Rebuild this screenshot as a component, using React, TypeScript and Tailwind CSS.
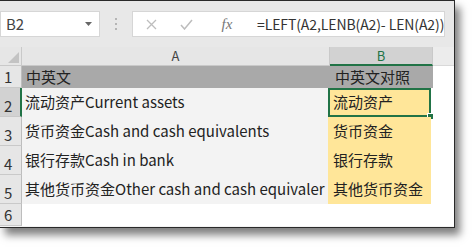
import React from "react";

const font = { fontFamily: '"Noto Sans CJK SC", "Noto Sans", sans-serif' };

function RowHead({ n, h, selected }: { n: number; h: string; selected?: boolean }) {
  return (
    <div
      className={`${h} w-[22px] shrink-0 flex items-end pl-[4px] pb-[1px] border-b border-[#c9c9c9] text-[15px] leading-[18px] text-[#333] ${
        selected ? "bg-[#d2d2d2] border-r-2 border-r-[#217346]" : "bg-[#e6e6e6] border-r border-r-[#bdbdbd]"
      }`}
    >
      {n}
    </div>
  );
}

export default function App() {
  const rows = [
    { n: 2, a: "流动资产Current assets", b: "流动资产" },
    { n: 3, a: "货币资金Cash and cash equivalents", b: "货币资金" },
    { n: 4, a: "银行存款Cash in bank", b: "银行存款" },
    { n: 5, a: "其他货币资金Other cash and cash equivaler", b: "其他货币资金" },
  ];
  return (
    <div className="w-[476px] h-[249px] bg-white overflow-hidden" style={font}>
      <div className="w-[455px] h-[228px] border-t border-r border-b border-[#2a2a2a] bg-[#f3f3f3] shadow-[5px_7px_8px_rgba(0,0,0,0.5)] flex flex-col overflow-hidden">
        {/* formula bar */}
        <div className="h-[46px] bg-[#e8e8e8] flex items-start pt-[10px]">
          <div className="w-[100px] h-[26px] bg-white border border-[#d6d6d6] flex items-center justify-between pl-[5px] pr-[7px]">
            <span className="text-[15px] text-[#444]">B2</span>
            <svg width="7" height="4" viewBox="0 0 7 4"><path d="M0 0h7L3.5 4z" fill="#666" /></svg>
          </div>
          <div className="w-[32px] h-[26px] flex flex-col items-center justify-center gap-[3px]">
            <span className="w-[2px] h-[2px] bg-[#b5b5b5]" />
            <span className="w-[2px] h-[2px] bg-[#b5b5b5]" />
            <span className="w-[2px] h-[2px] bg-[#b5b5b5]" />
          </div>
          <div className="w-[313px] h-[26px] bg-white border border-[#d6d6d6] flex items-center whitespace-nowrap">
            <div className="w-[36px] shrink-0 flex justify-center">
              <svg width="11" height="11" viewBox="0 0 11 11"><path d="M1 1l9 9M10 1l-9 9" stroke="#bdbdbd" strokeWidth="1.3" /></svg>
            </div>
            <div className="w-[34px] shrink-0 flex justify-center">
              <svg width="13" height="11" viewBox="0 0 13 11"><path d="M1 6l3.5 4L12 1" stroke="#bdbdbd" strokeWidth="1.5" fill="none" /></svg>
            </div>
            <div className="w-[48px] shrink-0 flex justify-center">
              <span className="text-[15px] italic text-[#777]" style={{ fontFamily: '"Liberation Serif", serif' }}>fx</span>
            </div>
            <span className="ml-[6px] text-[14px] tracking-[-0.1px] text-[#333]">=LEFT(A2,LENB(A2)- LEN(A2))</span>
          </div>
        </div>
        {/* column headers */}
        <div className="h-[19px] flex bg-[#e6e6e6]">
          <div className="w-[22px] shrink-0 border-r border-b border-[#c9c9c9] relative">
            <svg className="absolute right-[2px] bottom-[2px]" width="11" height="11" viewBox="0 0 11 11"><path d="M11 0V11H0z" fill="#c3c3c3" /></svg>
          </div>
          <div className="w-[308px] shrink-0 border-r border-b border-[#c9c9c9] flex items-center justify-center text-[13px] text-[#444]">A</div>
          <div className="w-[103px] shrink-0 bg-[#d2d2d2] border-r border-[#c9c9c9] border-b-2 border-b-[#217346] flex items-center justify-center text-[13px] text-[#217346]">B</div>
          <div className="flex-1 border-b border-[#d9d9d9] bg-[#ececec]" />
        </div>
        {/* row 1 */}
        <div className="h-[22px] flex">
          <RowHead n={1} h="h-[22px]" />
          <div className="w-[308px] shrink-0 bg-[#a9a9a9] flex items-center pl-[4px] text-[15px] text-[#222]">中英文</div>
          <div className="w-[103px] shrink-0 bg-[#a9a9a9] flex items-center pl-[5px] text-[15px] text-[#222]">中英文对照</div>
          <div className="flex-1 bg-white" />
        </div>
        {rows.map((r, i) => (
          <div key={r.n} className="h-[29px] flex">
            <RowHead n={r.n} h="h-[29px]" selected={i === 0} />
            <div className="w-[306px] shrink-0 flex items-center pl-[3px] text-[15px] text-[#222] whitespace-nowrap overflow-hidden">{r.a}</div>
            <div className={`w-[103px] shrink-0 bg-[#ffe699] flex items-center text-[15px] text-[#222] relative ${i === 0 ? "border-2 border-[#217346] pl-[3px]" : "pl-[5px]"}`}>
              {r.b}
              {i === 0 && <span className="absolute right-[-5px] bottom-[-5px] w-[7px] h-[7px] bg-[#217346] border border-white" />}
            </div>
            <div className="flex-1 bg-white" />
          </div>
        ))}
        <div className="h-[22px] flex bg-white">
          <RowHead n={6} h="h-[22px]" />
          <div className="flex-1" />
        </div>
      </div>
    </div>
  );
}
